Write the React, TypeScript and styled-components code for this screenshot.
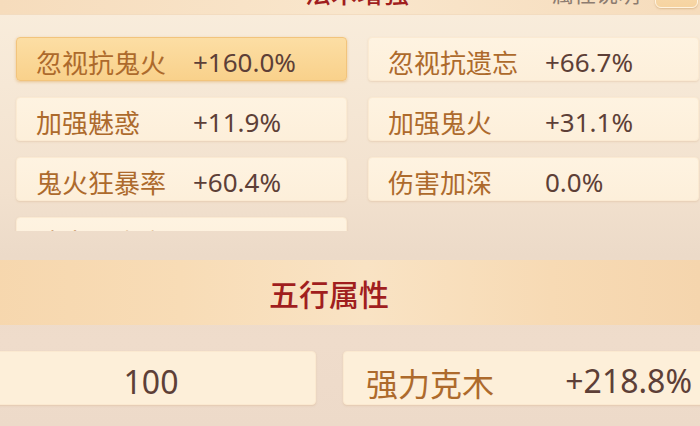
import React from "react";
import styled, { createGlobalStyle } from "styled-components";

const GlobalStyle = createGlobalStyle`
  html, body { margin: 0; padding: 0; }
  body {
    width: 700px;
    height: 426px;
    overflow: hidden;
    background: #f1e0cd;
    font-family: "Noto Sans CJK SC", "Noto Sans", sans-serif;
  }
  * { box-sizing: border-box; }
`;

const Screen = styled.div`
  width: 700px;
  height: 426px;
  overflow: hidden;
  display: flex;
  flex-direction: column;
  background: linear-gradient(
    180deg,
    #f9eddc 0%,
    #f6e8d6 20%,
    #f2e1ce 45%,
    #ecdac8 60%,
    #efdccb 80%,
    #eddac9 100%
  );
`;

const TopBar = styled.div`
  flex-shrink: 0;
  margin-top: -30px;
  height: 45px;
  display: grid;
  grid-template-columns: 1fr auto 1fr;
  align-items: center;
  padding: 0 2px 0 16px;
  background: linear-gradient(90deg, #f6dcbc 0%, #f9e6cc 50%, #f6dcbc 100%);
  border-bottom: 1px solid #f3dcc0;
`;

const Title = styled.div<{ $size: number }>`
  grid-column: 2;
  font-size: ${(p) => p.$size}px;
  line-height: 1;
  font-weight: 500;
  color: #a01e1e;
  letter-spacing: 0;
`;

const TopRight = styled.div`
  grid-column: 3;
  align-self: stretch;
  display: flex;
  justify-content: flex-end;
  align-items: flex-end;
  gap: 15px;
`;

const Hint = styled.span`
  font-size: 22px;
  line-height: 1;
  color: #8d7c70;
  margin-bottom: 11px;
`;

const SmallButton = styled.div`
  width: 43px;
  height: 30px;
  margin-bottom: 6px;
  border-radius: 6px;
  background: linear-gradient(180deg, #f9dfb5, #f6d3a0);
  border: 1px solid #fff3df;
  box-shadow: 0 1px 2px rgba(170, 120, 60, 0.35);
`;

const ScrollArea = styled.div`
  flex-shrink: 0;
  height: 216px;
  overflow: hidden;
  padding: 22px 0 0 16px;
`;

const StatGrid = styled.div`
  display: grid;
  grid-template-columns: 331px 331px;
  grid-auto-rows: 44px;
  column-gap: 21px;
  row-gap: 16px;
`;

const StatCard = styled.div<{ $active?: boolean }>`
  display: flex;
  align-items: center;
  padding: 6px 0 0 19px;
  border-radius: 4px;
  background: ${(p) =>
    p.$active
      ? "linear-gradient(180deg, #fcdea4 0%, #f9d18b 100%)"
      : "linear-gradient(180deg, #fef3e1 0%, #fdefda 100%)"};
  border: 1px solid ${(p) => (p.$active ? "#f2c47c" : "#fbead2")};
  box-shadow: ${(p) =>
    p.$active
      ? "0 1px 3px rgba(214, 150, 60, 0.45)"
      : "0 1px 2px rgba(190, 140, 90, 0.22)"};
`;

const Label = styled.span<{ $size: number; $width?: number }>`
  flex-shrink: 0;
  width: ${(p) => (p.$width ? `${p.$width}px` : "auto")};
  font-family: "Noto Sans CJK SC", sans-serif;
  font-size: ${(p) => p.$size}px;
  line-height: 1;
  color: #ad6a2c;
`;

const Value = styled.span<{ $size: number }>`
  font-family: "Noto Sans", "Noto Sans CJK SC", sans-serif;
  font-size: ${(p) => p.$size}px;
  line-height: 1;
  color: #5d3f37;
`;

const Lower = styled.div`
  flex-shrink: 0;
  margin-top: 29px;
  margin-left: -42px;
  width: 742px;
  display: flex;
  flex-direction: column;
`;

const Band = styled.div`
  height: 65px;
  display: flex;
  align-items: center;
  justify-content: center;
  background: linear-gradient(
    90deg,
    #f6d6ac 0%,
    #f8dcb6 30%,
    #f9e3c4 55%,
    #f7dab4 80%,
    #f5d5ad 100%
  );
`;

const BottomRow = styled.div`
  margin-top: 26px;
  padding-left: 18px;
  display: flex;
  gap: 27px;
`;

const BigCard = styled.div<{ $w: number; $center?: boolean }>`
  width: ${(p) => p.$w}px;
  height: 54px;
  flex-shrink: 0;
  display: flex;
  align-items: center;
  justify-content: ${(p) => (p.$center ? "center" : "flex-start")};
  padding: 7px 12px 0 22px;
  border-radius: 4px;
  background: #fdefd9;
  border: 1px solid #fbe9d0;
  box-shadow: 0 1px 2px rgba(190, 140, 90, 0.22);
`;

const Push = styled.span`
  margin-left: auto;
`;

type Stat = { label: string; value: string; active?: boolean };

const stats: Stat[] = [
  { label: "忽视抗鬼火", value: "+160.0%", active: true },
  { label: "忽视抗遗忘", value: "+66.7%" },
  { label: "加强魅惑", value: "+11.9%" },
  { label: "加强鬼火", value: "+31.1%" },
  { label: "鬼火狂暴率", value: "+60.4%" },
  { label: "伤害加深", value: "0.0%" },
  { label: "法术暴击率", value: "+12.5%" },
];

export default function App() {
  return (
    <>
      <GlobalStyle />
      <Screen>
        <TopBar>
          <Title $size={26}>法术增强</Title>
          <TopRight>
            <Hint>属性说明</Hint>
            <SmallButton />
          </TopRight>
        </TopBar>
        <ScrollArea>
          <StatGrid>
            {stats.map((s) => (
              <StatCard key={s.label} $active={s.active}>
                <Label $size={26} $width={157}>
                  {s.label}
                </Label>
                <Value $size={26}>{s.value}</Value>
              </StatCard>
            ))}
          </StatGrid>
        </ScrollArea>
        <Lower>
          <Band>
            <Title $size={30}>五行属性</Title>
          </Band>
          <BottomRow>
            <BigCard $w={340} $center>
              <Value $size={32}>100</Value>
            </BigCard>
            <BigCard $w={362}>
              <Label $size={32}>强力克木</Label>
              <Push>
                <Value $size={32}>+218.8%</Value>
              </Push>
            </BigCard>
          </BottomRow>
        </Lower>
      </Screen>
    </>
  );
}
